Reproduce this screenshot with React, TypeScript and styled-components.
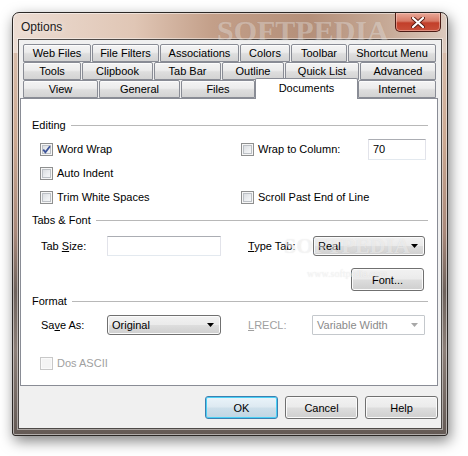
import React from 'react';
import styled, { createGlobalStyle } from 'styled-components';

const Global = createGlobalStyle`
  html, body { margin: 0; padding: 0; background: #ffffff; }
  body {
    width: 468px; height: 456px; overflow: hidden;
    font-family: "Liberation Sans", Arial, sans-serif;
    font-size: 11px; color: #000;
  }
  * { box-sizing: border-box; }
`;

const Stage = styled.div`
  padding: 12px 0 0 12px;
`;

const Window = styled.div`
  position: relative;
  width: 436px;
  height: 424px;
  border: 1px solid #2c2826;
  border-radius: 7px 7px 3px 3px;
  padding: 0 5px 6px 5px;
  display: flex;
  flex-direction: column;
  background:
    linear-gradient(to right, #ecdcd2 0%, #e0c6b5 28%, #c39f89 46%, #b48f79 68%, #c6a996 86%, #dccabe 100%) top / 100% 40px no-repeat,
    linear-gradient(to bottom, #dcc4b4 0%, #cba891 30%, #a8887a 52%, #6e625c 66%, #8c7f78 80%, #645a55 100%);
  box-shadow: inset 0 0 0 1px rgba(255, 255, 255, 0.5), 2px 5px 14px rgba(0, 0, 0, 0.5);
`;

const TitleBar = styled.div`
  height: 26px;
  display: flex;
  align-items: flex-start;
`;

const Title = styled.span`
  font-size: 12px;
  color: #1a1a1a;
  margin: 7px 0 0 3px;
  text-shadow: 0 0 6px rgba(255, 255, 255, 0.9);
`;

const Spacer = styled.div`
  flex: 1;
`;

const CloseButton = styled.div`
  width: 46px;
  height: 19px;
  margin-right: 1px;
  border: 1px solid #4d1b14;
  border-top: none;
  border-radius: 0 0 5px 5px;
  background: linear-gradient(to bottom, #e9a898 0%, #d77a66 45%, #c23f2a 55%, #c9503a 100%);
  box-shadow: inset 0 0 0 1px rgba(255, 220, 210, 0.45);
  display: flex;
  align-items: center;
  justify-content: center;
`;

const Watermark = styled.div<{ $size: number; $top: number; $left: number; $op: number; $bold?: boolean }>`
  position: absolute;
  top: ${(p) => p.$top}px;
  left: ${(p) => p.$left}px;
  font-family: "Liberation Serif", "Times New Roman", serif;
  font-weight: ${(p) => (p.$bold ? 'bold' : 'normal')};
  font-size: ${(p) => p.$size}px;
  line-height: 1;
  color: rgba(255, 255, 255, ${(p) => p.$op});
  text-shadow: 0 0 1px rgba(150, 150, 150, ${(p) => p.$op * 0.5});
  pointer-events: none;
  white-space: nowrap;
  z-index: 5;
`;

const Client = styled.div`
  flex: 1;
  border: 1px solid #4e4a48;
  background: #f0f0f0;
  box-shadow: 0 0 0 1px rgba(255, 255, 255, 0.45);
  display: flex;
  flex-direction: column;
  padding: 4px 3px 0 1px;
`;

const TabStrip = styled.div`
  display: flex;
  flex-direction: column;
  padding: 0 2px 0 3px;
`;

const TabRow = styled.div`
  display: flex;
  gap: 1px;
  height: 18px;
  align-items: flex-start;
`;

const Tab = styled.div<{ $w: number; $active?: boolean }>`
  position: relative;
  width: ${(p) => p.$w}px;
  height: ${(p) => (p.$active ? 21 : 18)}px;
  margin: ${(p) => (p.$active ? '-2px -1px 0 -1px' : '0')};
  border: 1px solid #898c95;
  border-bottom: ${(p) => (p.$active ? 'none' : '1px solid #898c95')};
  border-radius: 2px 2px 0 0;
  background: ${(p) =>
    p.$active ? '#ffffff' : 'linear-gradient(to bottom, #f4f4f4 0%, #ececec 45%, #dedede 55%, #d3d3d3 100%)'};
  box-shadow: ${(p) => (p.$active ? 'none' : 'inset 0 1px 0 #fcfcfc')};
  display: flex;
  justify-content: center;
  align-items: ${(p) => (p.$active ? 'flex-start' : 'center')};
  padding-top: ${(p) => (p.$active ? '2px' : '0')};
  z-index: ${(p) => (p.$active ? 2 : 0)};
  white-space: nowrap;
  line-height: 14px;
`;

const Panel = styled.div`
  position: relative;
  height: 288px;
  border: 1px solid #898c95;
  background: #ffffff;
  padding: 18px 9px 0 11px;
  display: flex;
  flex-direction: column;
`;

const GroupHeader = styled.div<{ $gap: number }>`
  height: 16px;
  margin-top: ${(p) => p.$gap}px;
  display: flex;
  align-items: center;
  line-height: 14px;
  &::after {
    content: '';
    flex: 1;
    height: 1px;
    margin-left: 5px;
    background: #b8b8b8;
  }
`;

const Grid = styled.div<{ $cols: string; $rows: string; $gap: number }>`
  display: grid;
  grid-template-columns: ${(p) => p.$cols};
  grid-template-rows: ${(p) => p.$rows};
  align-items: center;
  padding-left: 8px;
  margin-top: ${(p) => p.$gap}px;
`;

const CheckLabel = styled.label<{ $disabled?: boolean; $col?: number }>`
  display: flex;
  align-items: center;
  gap: 4px;
  color: ${(p) => (p.$disabled ? '#a0a0a0' : '#000')};
  grid-column: ${(p) => p.$col ?? 'auto'};
  white-space: nowrap;
  line-height: 14px;
`;

const Box = styled.span<{ $disabled?: boolean }>`
  width: 13px;
  height: 13px;
  flex: none;
  border: 1px solid ${(p) => (p.$disabled ? '#c8c8c8' : '#8e8f8f')};
  background: ${(p) => (p.$disabled ? '#f4f4f4' : 'linear-gradient(135deg, #d3d6da 0%, #eef0f2 60%, #fafafa 100%)')};
  box-shadow: ${(p) => (p.$disabled ? 'inset 0 0 0 1px #fafafa' : 'inset 0 0 0 1px #f6f6f6, inset 0 0 0 2px #bcc0c5')};
  display: flex;
  align-items: center;
  justify-content: center;
`;

const FieldLabel = styled.span<{ $disabled?: boolean; $col?: number }>`
  grid-column: ${(p) => p.$col ?? 'auto'};
  color: ${(p) => (p.$disabled ? '#a0a0a0' : '#000')};
  padding-left: 1px;
  white-space: nowrap;
  line-height: 14px;
`;

const TextBox = styled.div<{ $h: number }>`
  height: ${(p) => p.$h}px;
  border: 1px solid #e2e3ea;
  border-top-color: #abadb3;
  border-bottom-color: #e3e9ef;
  background: #fff;
  padding: 2px 0 0 4px;
  line-height: 14px;
`;

const Combo = styled.div<{ $disabled?: boolean }>`
  height: 20px;
  border: 1px solid ${(p) => (p.$disabled ? '#c4c8cc' : '#707070')};
  border-radius: ${(p) => (p.$disabled ? '1px' : '3px')};
  background: ${(p) =>
    p.$disabled ? '#ffffff' : 'linear-gradient(to bottom, #f2f2f2 0%, #ebebeb 48%, #dddddd 52%, #cfcfcf 100%)'};
  box-shadow: ${(p) => (p.$disabled ? 'none' : 'inset 0 0 0 1px #fbfbfb')};
  color: ${(p) => (p.$disabled ? '#8a8a8a' : '#000')};
  display: flex;
  align-items: center;
  justify-content: space-between;
  padding: 0 6px 0 4px;
  line-height: 14px;
`;

const Button = styled.div<{ $default?: boolean }>`
  width: 73px;
  height: 23px;
  border: 1px solid ${(p) => (p.$default ? '#3c7fb1' : '#707070')};
  border-radius: 3px;
  background: ${(p) =>
    p.$default
      ? 'linear-gradient(to bottom, #eaf4fa 0%, #dde9f1 48%, #cddfea 52%, #c0d5e3 100%)'
      : 'linear-gradient(to bottom, #f2f2f2 0%, #ebebeb 48%, #dddddd 52%, #cfcfcf 100%)'};
  box-shadow: ${(p) => (p.$default ? 'inset 0 0 0 1px #4ad0f5' : 'inset 0 0 0 1px #fbfbfb')};
  display: flex;
  align-items: center;
  justify-content: center;
  line-height: 14px;
`;

const FontRow = styled.div`
  display: flex;
  justify-content: flex-end;
  margin: 12px 4px 0 0;
`;

const Buttons = styled.div`
  display: flex;
  justify-content: flex-end;
  gap: 7px;
  margin-top: 10px;
`;

const Arrow = ({ color }: { color: string }) => (
  <svg width="7" height="4" viewBox="0 0 7 4">
    <path d="M0 0 H7 L3.5 4 Z" fill={color} />
  </svg>
);

const Check = ({ on, disabled }: { on?: boolean; disabled?: boolean }) => (
  <Box $disabled={disabled}>
    {on && (
      <svg width="9" height="9" viewBox="0 0 9 9">
        <path d="M1.2 4.6 L3.4 7.2 L8 1.2" stroke="#3d5499" strokeWidth="1.8" fill="none" />
      </svg>
    )}
  </Box>
);

const row1 = [
  ['Web Files', 68],
  ['File Filters', 67],
  ['Associations', 79],
  ['Colors', 50],
  ['Toolbar', 56],
  ['Shortcut Menu', 88],
] as const;
const row2 = [
  ['Tools', 58],
  ['Clipbook', 71],
  ['Tab Bar', 67],
  ['Outline', 62],
  ['Quick List', 74],
  ['Advanced', 76],
] as const;
const row3 = [
  ['View', 75],
  ['General', 81],
  ['Files', 74],
  ['Documents', 103],
  ['Internet', 78],
] as const;

export default function App() {
  return (
    <>
      <Global />
      <Stage>
        <Window>
          <TitleBar>
            <Title>Options</Title>
            <Spacer />
            <CloseButton>
              <svg width="14" height="11" viewBox="0 0 14 11">
                <path d="M2 1 L12 10 M12 1 L2 10" stroke="#5a1d14" strokeWidth="4" strokeLinecap="round" />
                <path d="M2 1 L12 10 M12 1 L2 10" stroke="#ffffff" strokeWidth="2.2" strokeLinecap="round" />
              </svg>
            </CloseButton>
          </TitleBar>
          <Watermark $bold $size={30} $top={3} $left={204} $op={0.3}>SOFTPEDIA</Watermark>
          <Client>
            <TabStrip>
              <TabRow>
                {row1.map(([t, w]) => (
                  <Tab key={t} $w={w}>{t}</Tab>
                ))}
              </TabRow>
              <TabRow>
                {row2.map(([t, w]) => (
                  <Tab key={t} $w={w}>{t}</Tab>
                ))}
              </TabRow>
              <TabRow>
                {row3.map(([t, w]) => (
                  <Tab key={t} $w={w} $active={t === 'Documents'}>{t}</Tab>
                ))}
              </TabRow>
            </TabStrip>
            <Panel>
              <GroupHeader $gap={0}>Editing</GroupHeader>
              <Grid $cols="201px 127px 58px" $rows="24px 24px 24px" $gap={4}>
                <CheckLabel><Check on />Word Wrap</CheckLabel>
                <CheckLabel><Check />Wrap to Column:</CheckLabel>
                <TextBox $h={21}>70</TextBox>
                <CheckLabel $col={1}><Check />Auto Indent</CheckLabel>
                <CheckLabel $col={1}><Check />Trim White Spaces</CheckLabel>
                <CheckLabel><Check />Scroll Past End of Line</CheckLabel>
              </Grid>
              <GroupHeader $gap={3}>Tabs &amp; Font</GroupHeader>
              <Grid $cols="67px 114px 26px 66px 112px" $rows="20px" $gap={8}>
                <FieldLabel>Tab <u>S</u>ize:</FieldLabel>
                <TextBox $h={20}></TextBox>
                <FieldLabel $col={4}><u>T</u>ype Tab:</FieldLabel>
                <Combo>
                  <span>Real</span>
                  <Arrow color="#000" />
                </Combo>
              </Grid>
              <FontRow>
                <Button>Font...</Button>
              </FontRow>
              <GroupHeader $gap={2}>Format</GroupHeader>
              <Grid $cols="67px 114px 26px 65px 113px" $rows="20px" $gap={6}>
                <FieldLabel>Sa<u>v</u>e As:</FieldLabel>
                <Combo>
                  <span>Original</span>
                  <Arrow color="#000" />
                </Combo>
                <FieldLabel $col={4} $disabled><u>L</u>RECL:</FieldLabel>
                <Combo $disabled>
                  <span>Variable Width</span>
                  <Arrow color="#a8a8a8" />
                </Combo>
              </Grid>
              <Grid $cols="200px" $rows="24px" $gap={16}>
                <CheckLabel $disabled><Check disabled />Dos ASCII</CheckLabel>
              </Grid>
              <Watermark $bold $size={22} $top={136} $left={263} $op={0.45}>SOFTPEDIA</Watermark>
              <Watermark $size={10} $top={170} $left={286} $op={0.6}>www.softpedia.com</Watermark>
            </Panel>
            <Buttons>
              <Button $default>OK</Button>
              <Button>Cancel</Button>
              <Button>Help</Button>
            </Buttons>
          </Client>
        </Window>
      </Stage>
    </>
  );
}
